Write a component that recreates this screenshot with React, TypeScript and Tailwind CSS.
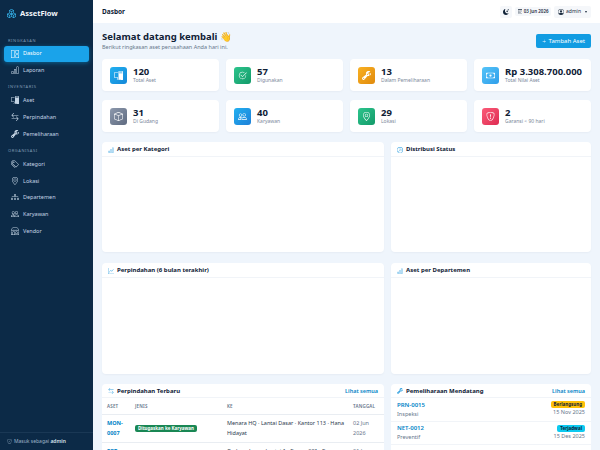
import type { IconType } from 'react-icons';
import {
  BsArrowLeftRight,
  BsBarChart,
  BsBarChartLine,
  BsBox,
  BsBoxes,
  BsCalendar3,
  BsCash,
  BsCheck2Circle,
  BsDiagram3,
  BsGeoAlt,
  BsGraphUp,
  BsGrid1X2,
  BsMoonStarsFill,
  BsPcDisplay,
  BsPeople,
  BsPersonCircle,
  BsPieChart,
  BsPlusLg,
  BsShieldCheck,
  BsShieldExclamation,
  BsShop,
  BsTags,
  BsWrenchAdjustable,
} from 'react-icons/bs';

const navGroups: { title: string; items: { icon: IconType; label: string; active?: boolean }[] }[] = [
  {
    title: 'RINGKASAN',
    items: [
      { icon: BsGrid1X2, label: 'Dasbor', active: true },
      { icon: BsBarChartLine, label: 'Laporan' },
    ],
  },
  {
    title: 'INVENTARIS',
    items: [
      { icon: BsPcDisplay, label: 'Aset' },
      { icon: BsArrowLeftRight, label: 'Perpindahan' },
      { icon: BsWrenchAdjustable, label: 'Pemeliharaan' },
    ],
  },
  {
    title: 'ORGANISASI',
    items: [
      { icon: BsTags, label: 'Kategori' },
      { icon: BsGeoAlt, label: 'Lokasi' },
      { icon: BsDiagram3, label: 'Departemen' },
      { icon: BsPeople, label: 'Karyawan' },
      { icon: BsShop, label: 'Vendor' },
    ],
  },
];

const stats = [
  { icon: BsPcDisplay, value: '120', label: 'Total Aset', tone: 'bg-gradient-to-br from-[#22b0f0] to-[#1588d8]' },
  { icon: BsCheck2Circle, value: '57', label: 'Digunakan', tone: 'bg-gradient-to-br from-[#2cc58d] to-[#129a69]' },
  { icon: BsWrenchAdjustable, value: '13', label: 'Dalam Pemeliharaan', tone: 'bg-gradient-to-br from-[#f9b122] to-[#e08a0c]' },
  { icon: BsCash, value: 'Rp 3.308.700.000', label: 'Total Nilai Aset', tone: 'bg-gradient-to-br from-[#55c4f8] to-[#2f9eea]' },
  { icon: BsBox, value: '31', label: 'Di Gudang', tone: 'bg-gradient-to-br from-[#8d99ad] to-[#5f6b80]' },
  { icon: BsPeople, value: '40', label: 'Karyawan', tone: 'bg-gradient-to-br from-[#22b0f0] to-[#1f80d8]' },
  { icon: BsGeoAlt, value: '29', label: 'Lokasi', tone: 'bg-gradient-to-br from-[#2cc58d] to-[#129a69]' },
  { icon: BsShieldExclamation, value: '2', label: 'Garansi < 90 hari', tone: 'bg-gradient-to-br from-[#fb5a78] to-[#de2a52]' },
];

const CardTitle = ({ icon: Icon, title, link }: { icon: IconType; title: string; link?: boolean }) => (
  <div className={`flex shrink-0 items-center border-b border-[#f1f4f8] px-[6px] pt-[1px] ${link ? 'h-[14px]' : 'h-[15px]'}`}>
    <Icon className="mr-[3px] h-[6px] w-[6px] text-[#38a3e0]" />
    <span className="text-[6px] font-bold text-[#0f2136]">{title}</span>
    {link && <span className="ml-auto text-[5.5px] font-semibold text-[#0284c7]">Lihat semua</span>}
  </div>
);

const App = () => {
  return (
    <div className="flex h-[450px] w-[600px] overflow-hidden bg-[#eff5fc] font-['Noto_Sans',sans-serif]">
      <aside className="flex w-[93px] shrink-0 flex-col bg-[#0c2a47] text-[#c4d4e4]">
        <div className="flex h-[27px] items-center gap-[4px] pl-[7px]">
          <BsBoxes className="h-[9px] w-[9px] text-[#38bdf8]" />
          <span className="text-[7.5px] font-bold text-[#f1f6fb]">AssetFlow</span>
        </div>
        <nav className="flex flex-1 flex-col px-[4px] pt-[10.5px]">
          {navGroups.map((group, i) => (
            <div key={group.title} className={i > 0 ? 'mt-[6px]' : ''}>
              <div className="mb-[2px] pl-[4px] text-[4px] leading-[6px] tracking-[0.6px] text-[#7f99b3]">{group.title}</div>
              <div className="flex flex-col gap-[0.8px]">
                {group.items.map((item) => (
                  <div
                    key={item.label}
                    className={`flex h-[16px] items-center gap-[4px] rounded-[3px] pl-[7px] text-[5.5px] ${
                      item.active ? 'bg-[#1aa3ea] text-white shadow-[0_1px_4px_rgba(14,165,233,0.45)]' : ''
                    }`}
                  >
                    <item.icon className="h-[8px] w-[8px]" />
                    <span>{item.label}</span>
                  </div>
                ))}
              </div>
            </div>
          ))}
        </nav>
        <div className="flex h-[18px] items-center gap-[2px] border-t border-[#1a3855] pl-[7px] text-[5px] text-[#9fb4c9]">
          <BsShieldCheck className="h-[5px] w-[5px]" />
          <span>
            Masuk sebagai <b className="font-semibold text-[#dbe6f0]">admin</b>
          </span>
        </div>
      </aside>

      <div className="flex min-w-0 flex-1 flex-col">
        <header className="flex h-[23px] shrink-0 items-center bg-white px-[9px]">
          <span className="text-[6.5px] font-bold text-[#0f2136]">Dasbor</span>
          <div className="ml-auto flex items-center gap-[3px]">
            <div className="flex h-[12px] w-[12px] items-center justify-center rounded-[2px] bg-[#f5f7fa]">
              <BsMoonStarsFill className="h-[6px] w-[6px] text-[#0f2136]" />
            </div>
            <div className="flex h-[9px] items-center gap-[1.5px] rounded-[2px] bg-[#f5f7fa] px-[2.5px] text-[4.5px] font-semibold text-[#1c2c3f]">
              <BsCalendar3 className="h-[4.5px] w-[4.5px]" />
              03 Jun 2026
            </div>
            <div className="flex h-[12px] items-center gap-[2px] rounded-[2px] bg-[#f5f7fa] px-[4px] text-[5px] text-[#1c2c3f]">
              <BsPersonCircle className="h-[6px] w-[6px]" />
              admin
              <span className="ml-[2px] h-0 w-0 border-x-[1.5px] border-t-[2px] border-x-transparent border-t-[#1c2c3f]" />
            </div>
          </div>
        </header>

        <main className="flex min-h-0 flex-1 flex-col px-[9px] pt-[8px]">
          <div className="flex h-[21px] items-start justify-between">
            <div>
              <h1 className="text-[9.5px] font-bold leading-[12px] text-[#0f2136]">Selamat datang kembali 👋</h1>
              <p className="text-[5.5px] leading-[8px] text-[#66758a]">Berikut ringkasan aset perusahaan Anda hari ini.</p>
            </div>
            <button className="mt-[3px] flex h-[14px] items-center gap-[2px] rounded-[2px] bg-[#119ce2] px-[6px] text-[6px] text-white">
              <BsPlusLg className="h-[4.5px] w-[4.5px]" />
              Tambah Aset
            </button>
          </div>

          <div className="mt-[7px] grid grid-cols-4 gap-x-[7px] gap-y-[9px] pt-[1px]">
            {stats.map((s) => (
              <div key={s.label} className="flex h-[32px] items-center gap-[6px] rounded-[4px] bg-white pl-[8px] shadow-[0_1px_2px_rgba(15,33,54,0.04)]">
                <div className={`flex h-[17px] w-[17px] shrink-0 items-center justify-center rounded-[3px] ${s.tone}`}>
                  <s.icon className="h-[9px] w-[9px] text-white" />
                </div>
                <div>
                  <div className="whitespace-nowrap text-[9.5px] font-bold leading-[11px] text-[#0f2136]">{s.value}</div>
                  <div className="whitespace-nowrap text-[5px] leading-[7px] text-[#7b899b]">{s.label}</div>
                </div>
              </div>
            ))}
          </div>

          <div className="mt-[10px] grid grid-cols-[282px_200px] gap-x-[7px]">
            <section className="flex h-[110px] flex-col rounded-[4px] bg-white shadow-[0_1px_2px_rgba(15,33,54,0.04)]">
              <CardTitle icon={BsBarChart} title="Aset per Kategori" />
            </section>
            <section className="flex h-[110px] flex-col rounded-[4px] bg-white shadow-[0_1px_2px_rgba(15,33,54,0.04)]">
              <CardTitle icon={BsPieChart} title="Distribusi Status" />
            </section>
          </div>

          <div className="mt-[11px] grid grid-cols-[282px_200px] gap-x-[7px]">
            <section className="flex h-[111px] flex-col rounded-[4px] bg-white shadow-[0_1px_2px_rgba(15,33,54,0.04)]">
              <CardTitle icon={BsGraphUp} title="Perpindahan (6 bulan terakhir)" />
            </section>
            <section className="flex h-[111px] flex-col rounded-[4px] bg-white shadow-[0_1px_2px_rgba(15,33,54,0.04)]">
              <CardTitle icon={BsBarChart} title="Aset per Departemen" />
            </section>
          </div>

          <div className="mt-[10px] grid grid-cols-[282px_200px] gap-x-[7px]">
            <section className="rounded-t-[4px] bg-white pb-[20px]">
              <CardTitle icon={BsArrowLeftRight} title="Perpindahan Terbaru" link />
              <div className="grid grid-cols-[28px_92px_126px_1fr] border-b border-[#e9edf2] py-[5px] pl-[5px] text-[4.5px] font-semibold leading-[6px] tracking-[0.2px] text-[#66758a]">
                <span>ASET</span>
                <span>JENIS</span>
                <span>KE</span>
                <span>TANGGAL</span>
              </div>
              <div className="grid grid-cols-[28px_92px_126px_1fr] items-center py-[4px] pl-[5px] text-[5.5px] leading-[9.5px] text-[#2b3a4d]">
                <span className="font-bold text-[#0284c7]">
                  MON-
                  <br />
                  0007
                </span>
                <span>
                  <span className="inline-block rounded-[2px] bg-[#198754] px-[3px] text-[4.5px] font-bold leading-[7px] text-white">
                    Ditugaskan ke Karyawan
                  </span>
                </span>
                <span className="pr-[8px]">Menara HQ · Lantai Dasar · Kantor 113 · Hana Hidayat</span>
                <span className="text-[#66758a]">
                  02 Jun
                  <br />
                  2026
                </span>
              </div>
              <div className="grid grid-cols-[28px_92px_126px_1fr] border-t border-[#e9edf2] pl-[5px] pt-[4px] text-[5.5px] leading-[9.5px] text-[#2b3a4d]">
                <span className="font-bold text-[#0284c7]">PRT-</span>
                <span />
                <span className="pr-[8px]">Gedung Jawa · Lantai 1 · Ruang 201 · Raza</span>
                <span className="text-[#66758a]">01 Jun</span>
              </div>
            </section>

            <section className="rounded-t-[4px] bg-white">
              <CardTitle icon={BsWrenchAdjustable} title="Pemeliharaan Mendatang" link />
              {[
                { code: 'PRN-0015', type: 'Inspeksi', status: 'Berlangsung', tone: 'bg-[#ffc107]', date: '15 Nov 2025' },
                { code: 'NET-0012', type: 'Preventif', status: 'Terjadwal', tone: 'bg-[#0dcaf0]', date: '15 Des 2025' },
              ].map((m) => (
                <div key={m.code} className="flex h-[23.5px] items-center justify-between border-b border-[#f1f4f8] px-[6px]">
                  <div>
                    <div className="text-[6px] font-semibold leading-[9px] text-[#0284c7]">{m.code}</div>
                    <div className="text-[5.5px] leading-[8px] text-[#66758a]">{m.type}</div>
                  </div>
                  <div className="flex flex-col items-end">
                    <span className={`rounded-[2px] px-[3px] text-[4.5px] font-bold leading-[7px] text-[#0f2136] ${m.tone}`}>{m.status}</span>
                    <span className="text-[5.5px] leading-[9px] text-[#66758a]">{m.date}</span>
                  </div>
                </div>
              ))}
            </section>
          </div>
        </main>
      </div>
    </div>
  );
};

export default App;
